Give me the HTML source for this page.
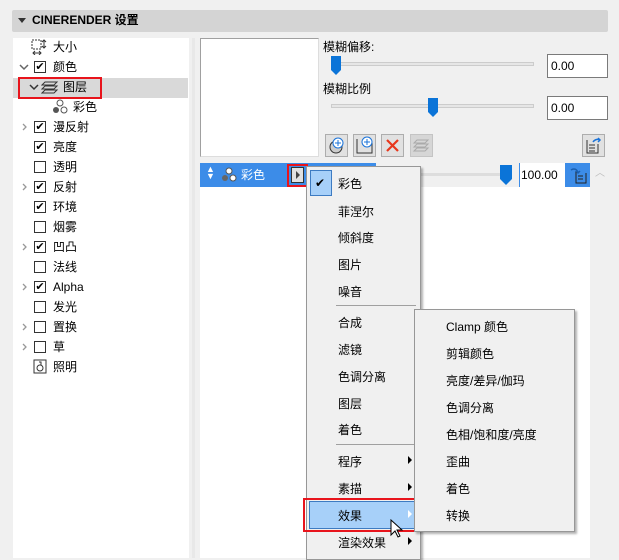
<!DOCTYPE html><html><head><meta charset="utf-8"><style>
*{margin:0;padding:0;box-sizing:border-box}
body{width:619px;height:558px;background:#f0f0f0;position:relative;overflow:hidden;font-family:"Liberation Sans","Noto Sans CJK SC",sans-serif;font-size:12px;color:#000}
.a{position:absolute}
.t{position:absolute;line-height:14px;white-space:nowrap}
.cb{position:absolute;width:12px;height:12px;border:1px solid #333;background:#fff;font-size:11px;line-height:10px;text-align:center}
.cr{position:absolute;width:8px;height:8px}
.cd{position:absolute;width:10px;height:8px}
.mi{position:absolute;white-space:nowrap;line-height:14px}
.btn{position:absolute;width:23px;height:23px;background:#e1e1e1;border:1px solid #adadad}
.arr{position:absolute;width:0;height:0;border-top:4px solid transparent;border-bottom:4px solid transparent;border-left:4px solid #000}
</style></head><body>
<div class="a" style="left:12px;top:10px;width:596px;height:22px;background:#d4d4d4;border-radius:2px"></div>
<div class="a" style="left:18px;top:18px;width:0;height:0;border-left:4px solid transparent;border-right:4px solid transparent;border-top:5px solid #333"></div>
<div class="t" style="left:32px;top:13px;font-weight:bold;font-size:12px">CINERENDER 设置</div>
<div class="a" style="left:13px;top:38px;width:176px;height:520px;background:#fff"></div>
<div class="a" style="left:13px;top:78px;width:175px;height:20px;background:#d9d9d9"></div>
<div class="a" style="left:18px;top:77px;width:84px;height:22px;border:2px solid #e8141c"></div>
<svg class="a" style="left:31px;top:39px" width="16" height="16"><rect x="1" y="1" width="9" height="9" fill="none" stroke="#333" stroke-dasharray="2 1"/><path d="M13 1v8M11 3l2-2 2 2M11 7l2 2 2-2M2 14h8M4 12l-2 2 2 2M8 12l2 2-2 2" stroke="#333" fill="none"/></svg>
<div class="t" style="left:53px;top:40px">大小</div>
<svg class="cd" style="left:19px;top:64px"><path d="M1 1l4 4 4-4" fill="none" stroke="#666" stroke-width="1.5"/></svg>
<div class="cb" style="left:34px;top:61px">✔</div><div class="t" style="left:53px;top:60px">颜色</div>
<svg class="cd" style="left:29px;top:84px"><path d="M1 1l4 4 4-4" fill="none" stroke="#333" stroke-width="1.5"/></svg>
<svg class="a" style="left:41px;top:80px" width="18" height="15"><path d="M4 2h12l-3 3H1zM4 6h12l-3 3H1zM4 10h12l-3 3H1z" fill="none" stroke="#333"/></svg>
<div class="t" style="left:63px;top:80px">图层</div>
<svg class="a" style="left:52px;top:99px" width="16" height="16"><circle cx="8" cy="4" r="3" fill="none" stroke="#555"/><circle cx="4" cy="11" r="3" fill="#555"/><circle cx="12" cy="11" r="3" fill="none" stroke="#555"/></svg>
<div class="t" style="left:73px;top:100px">彩色</div>
<svg class="cr" style="left:21px;top:123px"><path d="M2 1l3 3-3 3" fill="none" stroke="#999" stroke-width="1.3"/></svg><div class="cb" style="left:34px;top:121px">✔</div><div class="t" style="left:53px;top:120px">漫反射</div>
<div class="cb" style="left:34px;top:141px">✔</div><div class="t" style="left:53px;top:140px">亮度</div>
<div class="cb" style="left:34px;top:161px"></div><div class="t" style="left:53px;top:160px">透明</div>
<svg class="cr" style="left:21px;top:183px"><path d="M2 1l3 3-3 3" fill="none" stroke="#999" stroke-width="1.3"/></svg><div class="cb" style="left:34px;top:181px">✔</div><div class="t" style="left:53px;top:180px">反射</div>
<div class="cb" style="left:34px;top:201px">✔</div><div class="t" style="left:53px;top:200px">环境</div>
<div class="cb" style="left:34px;top:221px"></div><div class="t" style="left:53px;top:220px">烟雾</div>
<svg class="cr" style="left:21px;top:243px"><path d="M2 1l3 3-3 3" fill="none" stroke="#999" stroke-width="1.3"/></svg><div class="cb" style="left:34px;top:241px">✔</div><div class="t" style="left:53px;top:240px">凹凸</div>
<div class="cb" style="left:34px;top:261px"></div><div class="t" style="left:53px;top:260px">法线</div>
<svg class="cr" style="left:21px;top:283px"><path d="M2 1l3 3-3 3" fill="none" stroke="#999" stroke-width="1.3"/></svg><div class="cb" style="left:34px;top:281px">✔</div><div class="t" style="left:53px;top:280px">Alpha</div>
<div class="cb" style="left:34px;top:301px"></div><div class="t" style="left:53px;top:300px">发光</div>
<svg class="cr" style="left:21px;top:323px"><path d="M2 1l3 3-3 3" fill="none" stroke="#999" stroke-width="1.3"/></svg><div class="cb" style="left:34px;top:321px"></div><div class="t" style="left:53px;top:320px">置换</div>
<svg class="cr" style="left:21px;top:343px"><path d="M2 1l3 3-3 3" fill="none" stroke="#999" stroke-width="1.3"/></svg><div class="cb" style="left:34px;top:341px"></div><div class="t" style="left:53px;top:340px">草</div>
<svg class="a" style="left:33px;top:359px" width="14" height="15"><rect x="1" y="1" width="12" height="13" fill="none" stroke="#333"/><circle cx="7" cy="9" r="3" fill="none" stroke="#333"/><path d="M6 3h2v3" stroke="#333" fill="none"/></svg>
<div class="t" style="left:53px;top:360px">照明</div>
<div class="a" style="left:192px;top:38px;width:3px;height:520px;background:#e8e8e8"></div>
<div class="a" style="left:200px;top:38px;width:119px;height:119px;background:#fff;border:1px solid #a0a0a0;border-right-color:#ddd;border-bottom-color:#ddd"></div>
<div class="t" style="left:323px;top:40px">模糊偏移:</div>
<div class="a" style="left:331px;top:62px;width:203px;height:4px;background:#e6e6e6;border:1px solid #ccc"></div>
<svg class="a" style="left:330px;top:56px" width="12" height="19"><path d="M1 0h10v14l-5 5-5-5z" fill="#0b74d8"/></svg>
<div class="a" style="left:547px;top:54px;width:61px;height:24px;background:#fff;border:1px solid #7a7a7a"></div><div class="t" style="left:551px;top:59px">0.00</div>
<div class="t" style="left:323px;top:82px">模糊比例</div>
<div class="a" style="left:331px;top:104px;width:203px;height:4px;background:#e6e6e6;border:1px solid #ccc"></div>
<svg class="a" style="left:427px;top:98px" width="12" height="19"><path d="M1 0h10v14l-5 5-5-5z" fill="#0b74d8"/></svg>
<div class="a" style="left:547px;top:96px;width:61px;height:24px;background:#fff;border:1px solid #7a7a7a"></div><div class="t" style="left:551px;top:101px">0.00</div>
<div class="btn" style="left:325px;top:134px"><svg width="21" height="21"><circle cx="10" cy="12" r="6" fill="#ccc" stroke="#333"/><circle cx="12" cy="8" r="5" fill="#fff" stroke="#1a73d9"/><path d="M12 5v6M9 8h6" stroke="#1a73d9"/></svg></div>
<div class="btn" style="left:353px;top:134px"><svg width="21" height="21"><path d="M3 4v14h15V8" fill="none" stroke="#333"/><circle cx="13" cy="7" r="5" fill="#fff" stroke="#1a73d9"/><path d="M13 4v6M10 7h6" stroke="#1a73d9"/></svg></div>
<div class="btn" style="left:381px;top:134px"><svg width="21" height="21"><path d="M5 5l11 11M16 5L5 16" stroke="#e8371c" stroke-width="2.2"/></svg></div>
<div class="btn" style="left:410px;top:134px;background:#d6d6d6;border-color:#c4c4c4"><svg width="21" height="21"><path d="M6 5h11l-3 3H3zM6 9h11l-3 3H3zM6 13h11l-3 3H3z" fill="none" stroke="#aaa"/></svg></div>
<div class="btn" style="left:582px;top:134px"><svg width="21" height="21"><path d="M4 5v13h11V9M6 10h6M6 13h6M6 16h6" fill="none" stroke="#333"/><path d="M10 7c2-3 5-3 7-2M15 3l2 2-2 2" fill="none" stroke="#1a73d9" stroke-width="1.5"/></svg></div>
<div class="a" style="left:200px;top:187px;width:390px;height:371px;background:#fff"></div>
<div class="a" style="left:200px;top:163px;width:176px;height:24px;background:#3c8ce8"></div>
<div class="t" style="left:206px;top:166px;color:#fff;font-size:9px;line-height:7px">▲<br>▼</div>
<svg class="a" style="left:221px;top:167px" width="16" height="16"><circle cx="8" cy="4" r="3" fill="#fff" stroke="#555"/><circle cx="4" cy="11" r="3" fill="#666"/><circle cx="12" cy="11" r="3" fill="#fff" stroke="#555"/></svg>
<div class="t" style="left:241px;top:168px;color:#fff">彩色</div>
<div class="a" style="left:287px;top:164px;width:21px;height:23px;border:2px solid #e8141c"></div>
<div class="a" style="left:291px;top:167px;width:13px;height:16px;background:#e1e1e1;border:1px solid #333"></div>
<div class="arr" style="left:296px;top:171px;border-left-color:#444"></div>
<div class="a" style="left:420px;top:173px;width:85px;height:3px;background:#ddd"></div>
<svg class="a" style="left:499px;top:165px" width="14" height="20"><path d="M1 0h12v14l-6 6-6-6z" fill="#0b74d8"/></svg>
<div class="a" style="left:519px;top:163px;width:46px;height:24px;background:#fff;border-left:1px solid #3c8ce8"></div>
<div class="t" style="left:521px;top:168px">100.00</div>
<div class="a" style="left:565px;top:163px;width:25px;height:24px;background:#3c8ce8"></div>
<svg class="a" style="left:568px;top:166px" width="20" height="18"><path d="M8 5v12h10V7M10 10h5M10 13h5" fill="none" stroke="#222"/><path d="M3 4c3-2 6-1 7 3M8 5l2 2 2-2" fill="none" stroke="#1a5fb0" stroke-width="1.5"/></svg>
<div class="t" style="left:595px;top:167px;color:#bbb;font-size:10px">︿</div>
<div class="a" style="left:306px;top:166px;width:115px;height:394px;background:#f0f0f0;border:1px solid #979797;box-shadow:2px 2px 2px rgba(0,0,0,.3)"></div>
<div class="a" style="left:310px;top:170px;width:22px;height:26px;background:#a7d0f9;border:1px solid #3d7bc2"></div>
<div class="t" style="left:315px;top:176px;font-size:12px">✔</div>
<div class="mi" style="left:338px;top:177px">彩色</div>
<div class="mi" style="left:338px;top:205px">菲涅尔</div>
<div class="mi" style="left:338px;top:231px">倾斜度</div>
<div class="mi" style="left:338px;top:258px">图片</div>
<div class="mi" style="left:338px;top:285px">噪音</div>
<div class="a" style="left:336px;top:305px;width:80px;height:1px;background:#a0a0a0"></div>
<div class="mi" style="left:338px;top:316px">合成</div>
<div class="mi" style="left:338px;top:343px">滤镜</div>
<div class="mi" style="left:338px;top:370px">色调分离</div>
<div class="mi" style="left:338px;top:397px">图层</div>
<div class="mi" style="left:338px;top:423px">着色</div>
<div class="a" style="left:336px;top:444px;width:80px;height:1px;background:#a0a0a0"></div>
<div class="mi" style="left:338px;top:455px">程序</div><div class="arr" style="left:408px;top:456px"></div>
<div class="mi" style="left:338px;top:482px">素描</div><div class="arr" style="left:408px;top:483px"></div>
<div class="a" style="left:309px;top:501px;width:106px;height:28px;background:#a7d0f9;border:1px solid #3d7bc2"></div>
<div class="a" style="left:303px;top:498px;width:114px;height:34px;border:2px solid #e8141c"></div>
<div class="mi" style="left:338px;top:509px">效果</div><div class="arr" style="left:408px;top:510px;border-left-color:#fff"></div>
<div class="mi" style="left:338px;top:536px">渲染效果</div><div class="arr" style="left:408px;top:537px"></div>
<div class="a" style="left:414px;top:309px;width:161px;height:223px;background:#f0f0f0;border:1px solid #979797;box-shadow:2px 2px 2px rgba(0,0,0,.3)"></div>
<div class="mi" style="left:446px;top:320px">Clamp 颜色</div>
<div class="mi" style="left:446px;top:347px">剪辑颜色</div>
<div class="mi" style="left:446px;top:374px">亮度/差异/伽玛</div>
<div class="mi" style="left:446px;top:401px">色调分离</div>
<div class="mi" style="left:446px;top:428px">色相/饱和度/亮度</div>
<div class="mi" style="left:446px;top:455px">歪曲</div>
<div class="mi" style="left:446px;top:482px">着色</div>
<div class="mi" style="left:446px;top:509px">转换</div>
<svg class="a" style="left:390px;top:519px" width="14" height="20"><path d="M1 1v15l4-4 3 6 2-1-3-6h5z" fill="#fff" stroke="#000"/></svg>
</body></html>
